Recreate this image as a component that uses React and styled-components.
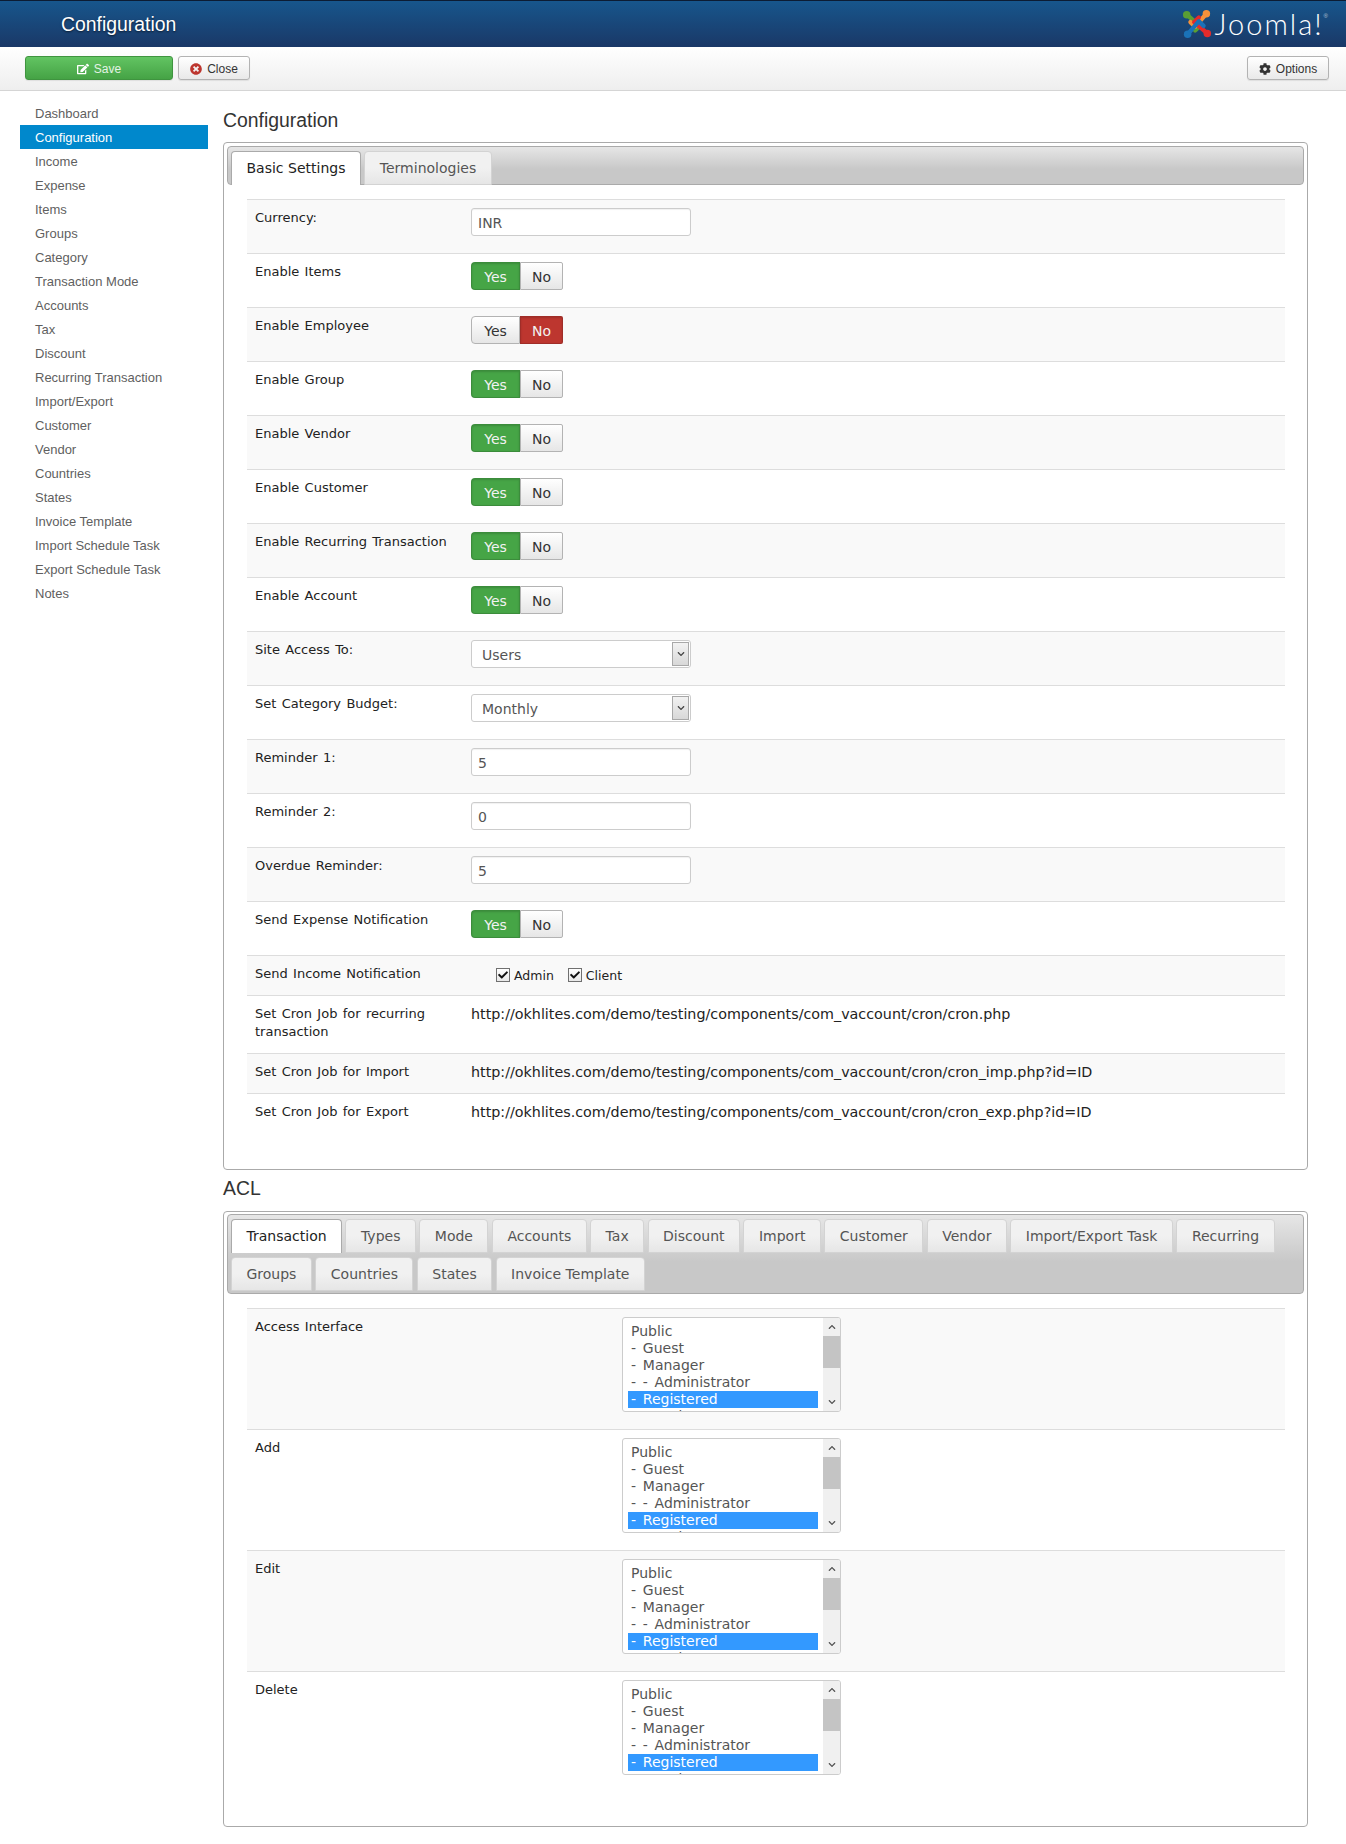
import React from 'react';
import styled, { createGlobalStyle } from 'styled-components';
import { FaEdit, FaTimesCircle, FaCog, FaCheck, FaChevronUp, FaChevronDown } from 'react-icons/fa';

const GlobalStyle = createGlobalStyle`
  html, body {
    margin: 0;
    background: #fff;
    font-family: "Liberation Sans", Arial, sans-serif;
    font-size: 13px;
    color: #333;
  }
  * { box-sizing: border-box; }
`;

const FORM_FONT = '"DejaVu Sans", Verdana, sans-serif';

const Header = styled.header`
  height: 47px;
  border-top: 1px solid #0c1c33;
  background: linear-gradient(#17568c, #1a3867);
  display: flex;
  align-items: center;
  justify-content: space-between;
  padding: 0 18px 0 61px;
`;

const PageTitle = styled.h1`
  margin: 0;
  font-size: 19.4px;
  font-weight: 400;
  line-height: 50px;
  color: #fff;
  text-shadow: 0 1px 2px rgba(0, 0, 0, .6);
`;

const Logo = styled.div`
  display: flex;
  align-items: center;
  gap: 3px;
  color: #fff;
`;

const LogoText = styled.span`
  font-family: Lato, sans-serif;
  font-weight: 300;
  font-size: 29px;
  line-height: 40px;
  letter-spacing: 2px;
`;

const LogoMark = styled.sup`
  align-self: flex-start;
  margin: 9px 0 0 -3px;
  font-size: 6px;
  line-height: 6px;
  color: #b9c9da;
`;

const Toolbar = styled.div`
  height: 44px;
  padding: 9px 17px 0 25px;
  display: flex;
  gap: 5px;
  background: linear-gradient(#fff, #eee);
  border-bottom: 1px solid #d5d5d5;
`;

const ToolButton = styled.button`
  height: 24px;
  width: ${p => p.$width}px;
  padding: 1px 0 0;
  display: inline-flex;
  align-items: center;
  justify-content: center;
  gap: 5px;
  font: 12px "Liberation Sans", Arial, sans-serif;
  border-radius: 3px;
  border: 1px solid ${p => p.$primary ? '#3f943f' : '#b3b3b3'};
  color: ${p => p.$primary ? '#e4f3e4' : '#333'};
  background: ${p => p.$primary ? 'linear-gradient(#62c462, #45a345)' : 'linear-gradient(#fff, #e9e9e9)'};
  box-shadow: 0 1px 1px rgba(0, 0, 0, .08);
  margin-left: ${p => p.$right ? 'auto' : '0'};
`;

const Page = styled.div`
  display: grid;
  grid-template-columns: 188px 1085px;
  column-gap: 15px;
  padding: 10px 0 0 20px;
`;

const Nav = styled.nav`
  display: flex;
  flex-direction: column;
`;

const NavItem = styled.a`
  height: 24px;
  line-height: 25px;
  padding-left: 15px;
  font-size: 13px;
  color: ${p => p.$active ? '#fff' : '#5f5f5f'};
  background: ${p => p.$active ? '#0088cc' : 'transparent'};
`;

const SectionTitle = styled.h2`
  margin: ${p => p.$lift ? '-1px' : '0'} 0 ${p => p.$gap}px;
  font-size: 19.4px;
  font-weight: 400;
  line-height: 38px;
  color: #333;
`;

const Panel = styled.section`
  height: ${p => p.$height}px;
  border: 1px solid #aaa;
  border-radius: 4px;
  padding: ${p => p.$top}px 3px 3px;
  font-family: ${FORM_FONT};
`;

const TabBar = styled.div`
  display: flex;
  flex-wrap: wrap;
  row-gap: 5px;
  padding: 4px 3px ${p => p.$bottom}px;
  border: 1px solid #aaa;
  border-radius: 4px;
  background: linear-gradient(#e6e6e6, #c8c8c8 60%);
`;

const Tab = styled.div`
  height: 34px;
  line-height: 33px;
  margin: 0 3.4px -1px 0;
  padding: 0 14.5px;
  font-size: 14px;
  border: 1px solid ${p => p.$active ? '#aaa' : '#d3d3d3'};
  border-bottom: ${p => p.$active ? '0' : '1px solid #d3d3d3'};
  border-radius: 4px 4px 0 0;
  color: ${p => p.$active ? '#222' : '#555'};
  background: ${p => p.$active ? '#fff' : 'linear-gradient(#f1f1f1 50%, #e6e6e6)'};
`;

const Rows = styled.div`
  margin: 14px 19px 0 20px;
`;

const Row = styled.div`
  display: grid;
  grid-template-columns: ${p => p.$labelWidth}px 1fr;
  height: ${p => p.$height}px;
  padding-top: 8px;
  border-top: 1px solid #ddd;
  background: ${p => p.$odd ? '#f9f9f9' : '#fff'};
`;

const Label = styled.div`
  padding: 1px 8px 0;
  font-size: 13px;
  line-height: 18px;
  word-spacing: 1.2px;
  color: #222;
`;

const TextInput = styled.input`
  display: block;
  width: 220px;
  height: 28px;
  padding: 1px 6px 0;
  font: 14px ${FORM_FONT};
  color: #555;
  background: #fff;
  border: 1px solid #ccc;
  border-radius: 3px;
  box-shadow: inset 0 1px 1px rgba(0, 0, 0, .06);
`;

const Dropdown = styled.div`
  width: 220px;
  height: 28px;
  display: flex;
  font-size: 14px;
  line-height: 28px;
  color: #555;
  background: #fff;
  border: 1px solid #ccc;
  border-radius: 3px;
`;

const DropdownValue = styled.span`
  flex: 1;
  padding-left: 10px;
`;

const DropdownArrow = styled.span`
  width: 17px;
  margin: 1px;
  display: flex;
  align-items: center;
  justify-content: center;
  color: #444;
  background: linear-gradient(#f2f2f2, #d8d8d8);
  border: 1px solid #a8a8a8;
`;

const Toggle = styled.div`
  display: flex;
  height: 28px;
`;

const ToggleOption = styled.span`
  width: ${p => p.$width}px;
  display: flex;
  align-items: center;
  justify-content: center;
  padding-top: 1px;
  font-size: 14px;
  border: 1px solid ${p => p.$color ? 'rgba(0, 0, 0, .15)' : '#b3b3b3'};
  border-radius: ${p => p.$first ? '4px 0 0 4px' : '0 2px 2px 0'};
  color: ${p => p.$color ? '#f2f2f2' : '#333'};
  background: ${p => p.$color || 'linear-gradient(#fff, #e6e6e6)'};
  box-shadow: ${p => p.$color ? 'inset 0 1px 2px rgba(0, 0, 0, .15)' : 'none'};
`;

const Checks = styled.div`
  display: flex;
  align-items: center;
  height: 20px;
  margin-top: 1px;
  padding-left: 25px;
  font-size: 12.5px;
  color: #222;
`;

const CheckBox = styled.span`
  width: 14px;
  height: 14px;
  margin-right: 4px;
  display: inline-flex;
  align-items: center;
  justify-content: center;
  background: linear-gradient(#fff, #e8e8e8);
  border: 1px solid #707070;
`;

const CheckLabel = styled.span`
  margin-right: 14px;
`;

const UrlText = styled.div`
  padding-top: 1px;
  font-size: 14.3px;
  line-height: 18px;
  color: #222;
`;

const ListBox = styled.div`
  width: 219px;
  height: 95px;
  display: flex;
  overflow: hidden;
  background: #fff;
  border: 1px solid #ccc;
  border-radius: 3px;
`;

const ListOptions = styled.div`
  flex: 1;
  height: 93px;
  overflow: hidden;
  padding: 5px 5px 0;
`;

const ListOption = styled.div`
  height: 17px;
  padding-left: 3px;
  font-size: 14px;
  line-height: 17px;
  word-spacing: 2.3px;
  color: ${p => p.$selected ? '#fff' : '#555'};
  background: ${p => p.$selected ? '#3399ff' : 'transparent'};
`;

const ScrollTrack = styled.div`
  width: 17px;
  display: flex;
  flex-direction: column;
  background: #f0f0f0;
`;

const ScrollArrow = styled.span`
  height: 18px;
  display: flex;
  align-items: center;
  justify-content: center;
  color: #555;
`;

const ScrollThumb = styled.span`
  height: 32px;
  background: #c4c4c4;
`;

const ScrollRest = styled.span`
  flex: 1;
`;

const hook = 'M5 6 L19 18 L14 23';

const JoomlaMark = () => (
  <svg width="30" height="32" viewBox="0 0 32 32" fill="none" strokeWidth="4.6" strokeLinecap="round" strokeLinejoin="round">
    <path d={hook} stroke="#5a9e33" />
    <path d={hook} stroke="#f6913a" transform="rotate(90 16 16)" />
    <path d={hook} stroke="#e32b2b" transform="rotate(180 16 16)" />
    <path d={hook} stroke="#1a72b8" transform="rotate(270 16 16)" />
    <circle cx="5" cy="6" r="4" fill="#5a9e33" />
    <circle cx="26" cy="5" r="4" fill="#f6913a" />
    <circle cx="27" cy="26" r="4" fill="#e32b2b" />
    <circle cx="6" cy="27" r="4" fill="#1a72b8" />
  </svg>
);

const navItems = ['Dashboard', 'Configuration', 'Income', 'Expense', 'Items', 'Groups', 'Category', 'Transaction Mode', 'Accounts', 'Tax', 'Discount', 'Recurring Transaction', 'Import/Export', 'Customer', 'Vendor', 'Countries', 'States', 'Invoice Template', 'Import Schedule Task', 'Export Schedule Task', 'Notes'];

const settings = [
  { label: 'Currency:', input: 'INR' },
  { label: 'Enable Items', yes: true },
  { label: 'Enable Employee', yes: false },
  { label: 'Enable Group', yes: true },
  { label: 'Enable Vendor', yes: true },
  { label: 'Enable Customer', yes: true },
  { label: 'Enable Recurring Transaction', yes: true },
  { label: 'Enable Account', yes: true },
  { label: 'Site Access To:', select: 'Users' },
  { label: 'Set Category Budget:', select: 'Monthly' },
  { label: 'Reminder 1:', input: '5' },
  { label: 'Reminder 2:', input: '0' },
  { label: 'Overdue Reminder:', input: '5' },
  { label: 'Send Expense Notification', yes: true },
  { label: 'Send Income Notification', checks: ['Admin', 'Client'], height: 40 },
  { label: 'Set Cron Job for recurring transaction', url: 'http://okhlites.com/demo/testing/components/com_vaccount/cron/cron.php', height: 58 },
  { label: 'Set Cron Job for Import', url: 'http://okhlites.com/demo/testing/components/com_vaccount/cron/cron_imp.php?id=ID', height: 40 },
  { label: 'Set Cron Job for Export', url: 'http://okhlites.com/demo/testing/components/com_vaccount/cron/cron_exp.php?id=ID', height: 40 },
];

const aclTabs = ['Transaction', 'Types', 'Mode', 'Accounts', 'Tax', 'Discount', 'Import', 'Customer', 'Vendor', 'Import/Export Task', 'Recurring', 'Groups', 'Countries', 'States', 'Invoice Template'];

const aclRows = ['Access Interface', 'Add', 'Edit', 'Delete'];

const groups = ['Public', '- Guest', '- Manager', '- - Administrator', '- Registered', '- - Author'];

const renderControl = (s) => {
  if (s.input) return <TextInput readOnly value={s.input} />;
  if (s.select) {
    return (
      <Dropdown>
        <DropdownValue>{s.select}</DropdownValue>
        <DropdownArrow><FaChevronDown size={8} /></DropdownArrow>
      </Dropdown>
    );
  }
  if (s.checks) {
    return (
      <Checks>
        {s.checks.map(c => (
          <React.Fragment key={c}>
            <CheckBox><FaCheck size={10} color="#111" /></CheckBox>
            <CheckLabel>{c}</CheckLabel>
          </React.Fragment>
        ))}
      </Checks>
    );
  }
  if (s.url) return <UrlText>{s.url}</UrlText>;
  return (
    <Toggle>
      <ToggleOption $first $width={49} $color={s.yes ? '#46a546' : ''}>Yes</ToggleOption>
      <ToggleOption $width={43} $color={s.yes ? '' : '#bd362f'}>No</ToggleOption>
    </Toggle>
  );
};

export default function App() {
  return (
    <>
      <GlobalStyle />
      <Header>
        <PageTitle>Configuration</PageTitle>
        <Logo>
          <JoomlaMark />
          <LogoText>Joomla!</LogoText>
          <LogoMark>®</LogoMark>
        </Logo>
      </Header>
      <Toolbar>
        <ToolButton $primary $width={148}><FaEdit size={12} color="#fff" />Save</ToolButton>
        <ToolButton $width={72}><FaTimesCircle size={12} color="#bd362f" />Close</ToolButton>
        <ToolButton $right $width={82}><FaCog size={12} color="#333" />Options</ToolButton>
      </Toolbar>
      <Page>
        <Nav>
          {navItems.map(n => <NavItem key={n} $active={n === 'Configuration'}>{n}</NavItem>)}
        </Nav>
        <main>
          <SectionTitle $gap={3}>Configuration</SectionTitle>
          <Panel $height={1028} $top={3}>
            <TabBar $bottom={0}>
              <Tab $active>Basic Settings</Tab>
              <Tab>Terminologies</Tab>
            </TabBar>
            <Rows>
              {settings.map((s, i) => (
                <Row key={s.label} $labelWidth={224} $height={s.height || 54} $odd={i % 2 === 0}>
                  <Label>{s.label}</Label>
                  <div>{renderControl(s)}</div>
                </Row>
              ))}
            </Rows>
          </Panel>
          <SectionTitle $lift $gap={4}>ACL</SectionTitle>
          <Panel $height={616} $top={2}>
            <TabBar $bottom={3}>
              {aclTabs.map((t, i) => <Tab key={t} $active={i === 0}>{t}</Tab>)}
            </TabBar>
            <Rows>
              {aclRows.map((r, i) => (
                <Row key={r} $labelWidth={375} $height={121} $odd={i % 2 === 0}>
                  <Label>{r}</Label>
                  <ListBox>
                    <ListOptions>
                      {groups.map(g => <ListOption key={g} $selected={g === '- Registered'}>{g}</ListOption>)}
                    </ListOptions>
                    <ScrollTrack>
                      <ScrollArrow><FaChevronUp size={8} /></ScrollArrow>
                      <ScrollThumb />
                      <ScrollRest />
                      <ScrollArrow><FaChevronDown size={8} /></ScrollArrow>
                    </ScrollTrack>
                  </ListBox>
                </Row>
              ))}
            </Rows>
          </Panel>
        </main>
      </Page>
    </>
  );
}
